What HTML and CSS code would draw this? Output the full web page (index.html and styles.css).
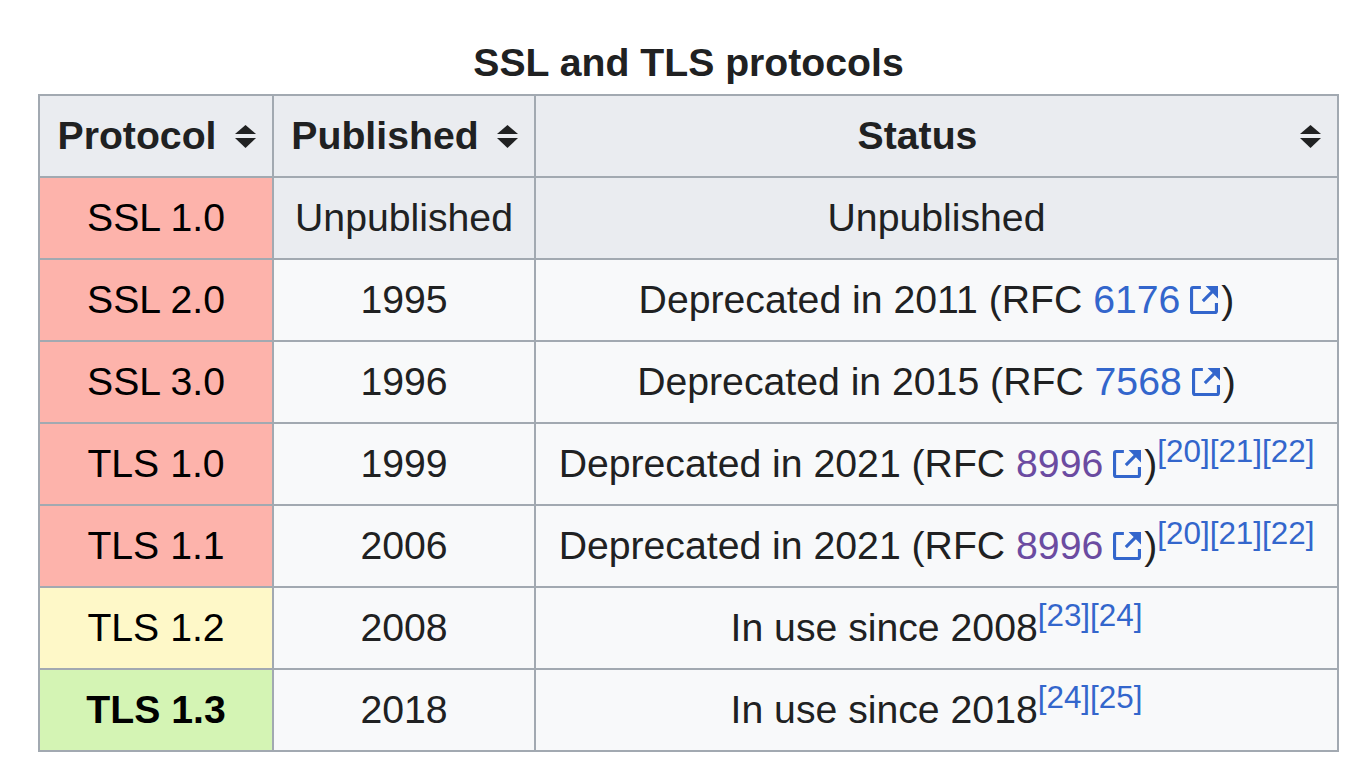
FILE: index.html
```html
<!DOCTYPE html>
<html lang="en">
<head>
<meta charset="utf-8">
<title>SSL and TLS protocols</title>
<link rel="stylesheet" href="styles.css">
</head>
<body>
<div class="page">
  <table class="wikitable">
    <caption>SSL and TLS protocols</caption>
    <colgroup>
      <col class="c1"><col class="c2"><col class="c3">
    </colgroup>
    <thead>
      <tr>
        <th><div class="hd"><span class="hd-text">Protocol</span><svg class="sort" viewBox="0 0 21 23" width="21" height="23"><path d="M10.5 0 L21 9 H0 Z"/><path d="M0 13 H21 L10.5 23 Z"/></svg></div></th>
        <th><div class="hd"><span class="hd-text">Published</span><svg class="sort" viewBox="0 0 21 23" width="21" height="23"><path d="M10.5 0 L21 9 H0 Z"/><path d="M0 13 H21 L10.5 23 Z"/></svg></div></th>
        <th><div class="hd"><span class="hd-text">Status</span><svg class="sort" viewBox="0 0 21 23" width="21" height="23"><path d="M10.5 0 L21 9 H0 Z"/><path d="M0 13 H21 L10.5 23 Z"/></svg></div></th>
      </tr>
    </thead>
    <tbody>
      <tr>
        <td class="proto bad">SSL 1.0</td>
        <td class="grey">Unpublished</td>
        <td class="grey">Unpublished</td>
      </tr>
      <tr>
        <td class="proto bad">SSL 2.0</td>
        <td>1995</td>
        <td>Deprecated in 2011 (RFC <a class="ext" href="#">6176<svg class="exticon" viewBox="1 1 18 18" width="28" height="28"><path d="M17 17H3V3h5V1H3a2 2 0 00-2 2v14a2 2 0 002 2h14a2 2 0 002-2v-5h-2z"/><path d="m11 1 3.29 3.29-5.73 5.73 1.42 1.42 5.73-5.73L19 9V1z"/></svg></a>)</td>
      </tr>
      <tr>
        <td class="proto bad">SSL 3.0</td>
        <td>1996</td>
        <td>Deprecated in 2015 (RFC <a class="ext" href="#">7568<svg class="exticon" viewBox="1 1 18 18" width="28" height="28"><path d="M17 17H3V3h5V1H3a2 2 0 00-2 2v14a2 2 0 002 2h14a2 2 0 002-2v-5h-2z"/><path d="m11 1 3.29 3.29-5.73 5.73 1.42 1.42 5.73-5.73L19 9V1z"/></svg></a>)</td>
      </tr>
      <tr>
        <td class="proto bad">TLS 1.0</td>
        <td>1999</td>
        <td>Deprecated in 2021 (RFC <a class="ext visited" href="#">8996<svg class="exticon" viewBox="1 1 18 18" width="28" height="28"><path d="M17 17H3V3h5V1H3a2 2 0 00-2 2v14a2 2 0 002 2h14a2 2 0 002-2v-5h-2z"/><path d="m11 1 3.29 3.29-5.73 5.73 1.42 1.42 5.73-5.73L19 9V1z"/></svg></a>)<sup class="ref"><a href="#">[20]</a></sup><sup class="ref"><a href="#">[21]</a></sup><sup class="ref"><a href="#">[22]</a></sup></td>
      </tr>
      <tr>
        <td class="proto bad">TLS 1.1</td>
        <td>2006</td>
        <td>Deprecated in 2021 (RFC <a class="ext visited" href="#">8996<svg class="exticon" viewBox="1 1 18 18" width="28" height="28"><path d="M17 17H3V3h5V1H3a2 2 0 00-2 2v14a2 2 0 002 2h14a2 2 0 002-2v-5h-2z"/><path d="m11 1 3.29 3.29-5.73 5.73 1.42 1.42 5.73-5.73L19 9V1z"/></svg></a>)<sup class="ref"><a href="#">[20]</a></sup><sup class="ref"><a href="#">[21]</a></sup><sup class="ref"><a href="#">[22]</a></sup></td>
      </tr>
      <tr>
        <td class="proto partial">TLS 1.2</td>
        <td>2008</td>
        <td>In use since 2008<sup class="ref"><a href="#">[23]</a></sup><sup class="ref"><a href="#">[24]</a></sup></td>
      </tr>
      <tr>
        <td class="proto good"><b>TLS 1.3</b></td>
        <td>2018</td>
        <td>In use since 2018<sup class="ref"><a href="#">[24]</a></sup><sup class="ref"><a href="#">[25]</a></sup></td>
      </tr>
    </tbody>
  </table>
</div>
</body>
</html>
```
FILE: styles.css
```css
html, body {
  margin: 0;
  padding: 0;
  background: #ffffff;
}

body {
  font-family: "Liberation Sans", Arial, Helvetica, sans-serif;
  color: #202122;
}

.page {
  padding: 31px 0 0 38px;
}

.wikitable {
  border-collapse: collapse;
  table-layout: fixed;
  width: 1299px;
  font-size: 39.2px;
  line-height: 62px;
  background: #f8f9fa;
  color: #202122;
  border: 2px solid #a2a9b1;
}

.wikitable caption {
  font-weight: bold;
  text-align: center;
  line-height: 63px;
  color: #202122;
}

.c1 { width: 234px; }
.c2 { width: 262px; }
.c3 { width: 803px; }

.wikitable th,
.wikitable td {
  border: 2px solid #a2a9b1;
  padding: 9px 16px;
  text-align: center;
  white-space: nowrap;
}

.wikitable th {
  background: #eaecf0;
  font-weight: bold;
}

.hd {
  display: flex;
  align-items: center;
  gap: 17px;
}

.hd-text {
  flex: 1;
  text-align: center;
}

.sort {
  flex: none;
  fill: #202122;
  display: block;
}

.wikitable td.grey {
  background: #eaecf0;
}

.wikitable td.proto {
  color: #000000;
}

.wikitable td.bad { background: #fdb3ab; }
.wikitable td.partial { background: #fef8c8; }
.wikitable td.good { background: #d4f4b4; }

a {
  color: #3366cc;
  text-decoration: none;
}

a.visited {
  color: #6b4ba1;
}

.exticon {
  fill: #3366cc;
  margin-left: 10px;
  margin-right: 3px;
  vertical-align: -1px;
}

sup.ref {
  font-size: 31.4px;
  line-height: 1;
  vertical-align: 15px;
}
```
